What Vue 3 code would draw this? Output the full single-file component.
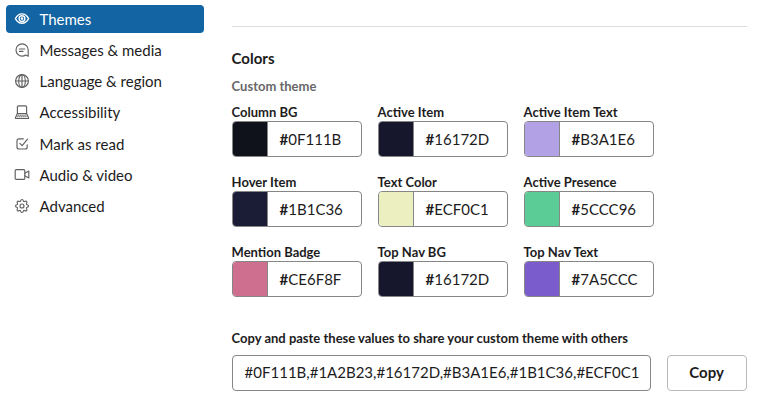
<script setup>
const menu = [
  { label: 'Themes', icon: 'eye', active: true },
  { label: 'Messages & media', icon: 'message' },
  { label: 'Language & region', icon: 'globe' },
  { label: 'Accessibility', icon: 'laptop' },
  { label: 'Mark as read', icon: 'check' },
  { label: 'Audio & video', icon: 'video' },
  { label: 'Advanced', icon: 'gear' },
]

const colors = [
  { label: 'Column BG', value: '0F111B' },
  { label: 'Active Item', value: '16172D' },
  { label: 'Active Item Text', value: 'B3A1E6' },
  { label: 'Hover Item', value: '1B1C36' },
  { label: 'Text Color', value: 'ECF0C1' },
  { label: 'Active Presence', value: '5CCC96' },
  { label: 'Mention Badge', value: 'CE6F8F' },
  { label: 'Top Nav BG', value: '16172D' },
  { label: 'Top Nav Text', value: '7A5CCC' },
]

const themeString = '#0F111B,#1A2B23,#16172D,#B3A1E6,#1B1C36,#ECF0C1'
</script>

<template>
  <div class="preferences">
    <nav class="sidebar">
      <a v-for="item in menu" :key="item.label" class="item" :class="{ active: item.active }">
        <svg class="icon" viewBox="0 0 16 16">
          <g v-if="item.icon === 'eye'" stroke-width="1.4">
            <path d="M1.400 7.600C3 4.700 5.200 2.900 8 2.900s5 1.800 6.600 4.700C13 10.500 10.800 12.300 8 12.300S3 10.500 1.400 7.600Z" />
            <circle cx="8" cy="7.600" r="2.900" />
            <circle cx="8" cy="7.600" r="0.600" />
          </g>
          <g v-else-if="item.icon === 'message'">
            <path d="M14.200 8A6.100 6.100 0 1 0 8.100 14.100c1.400 0 2.600-.4 3.600-1.100l2.500 1.200Z" />
            <path d="M5.400 7h5.400M5.400 9.400h3.600" />
          </g>
          <g v-else-if="item.icon === 'globe'">
            <circle cx="8" cy="8" r="6.400" />
            <ellipse cx="8" cy="8" rx="3.300" ry="6.400" />
            <path d="M1.500 8h13M8 1.500v13" />
          </g>
          <g v-else-if="item.icon === 'laptop'">
            <path d="M3.400 9.500V3c0-.7.4-1.100 1.100-1.100h7c.7 0 1.100.4 1.100 1.100v6.500" />
            <path d="M3.400 9.500h9.200l1.900 3.900v1.100h-13v-1.100Z" />
            <path d="M4 11.100h8M3.200 12.700h9.600" stroke-dasharray=".6 1.300" />
          </g>
          <g v-else-if="item.icon === 'check'">
            <path d="M9.400 2.800H5a2 2 0 0 0-2 2V11a2 2 0 0 0 2 2h6.200a2 2 0 0 0 2-2V8.800" />
            <path d="m5.900 7.300 2.300 2.400 5.300-6.500" />
          </g>
          <g v-else-if="item.icon === 'video'">
            <rect x="1.200" y="2.600" width="9.600" height="9.800" rx="1" />
            <path d="m10.800 6.300 4-2.200v6.800l-4-2.200" />
          </g>
          <g v-else>
            <path d="M6.500 3.200Q7 1.500 8 1.500T9.500 3.200q.3.500.9.300Q11.900 2.700 12.600 3.400T12.500 5.600q-.2.600.3.900Q14.500 7 14.500 8T12.800 9.500q-.5.300-.3.900Q13.300 11.900 12.600 12.600T10.400 12.500q-.6-.2-.9.300Q9 14.500 8 14.500T6.500 12.800q-.3-.5-.9-.3Q4.100 13.300 3.400 12.600T3.500 10.400q.2-.6-.3-.9Q1.500 9 1.500 8T3.200 6.500q.5-.3.3-.9Q2.700 4.100 3.400 3.400T5.600 3.500q.6.200.9-.3Z" />
            <circle cx="8" cy="8" r="2" />
          </g>
        </svg>
        <span>{{ item.label }}</span>
      </a>
    </nav>

    <main class="content">
      <hr class="divider" />
      <h2 class="title">Colors</h2>
      <p class="subtitle">Custom theme</p>

      <div class="grid">
        <label v-for="color in colors" :key="color.label" class="field">
          <span class="label">{{ color.label }}</span>
          <span class="box">
            <span class="swatch" :style="{ background: '#' + color.value }"></span>
            <span class="value"><b>#</b>{{ color.value }}</span>
          </span>
        </label>
      </div>

      <p class="share-label">Copy and paste these values to share your custom theme with others</p>
      <div class="share">
        <div class="share-value">{{ themeString }}</div>
        <button class="copy" type="button">Copy</button>
      </div>
    </main>
  </div>
</template>

<style>
body {
  background: #fff;
}
</style>

<style scoped>
.preferences {
  display: flex;
  height: 411px;
  overflow: hidden;
  box-sizing: border-box;
  padding: 5px 17.400px 0 6px;
  gap: 27.600px;
  background: #fff;
  color: #1d1c1d;
  font-family: Lato, "Liberation Sans", sans-serif;
  font-size: 15px;
}
.sidebar {
  width: 198px;
  flex: none;
  display: flex;
  flex-direction: column;
  gap: 3.150px;
}
.item {
  display: flex;
  align-items: center;
  height: 28px;
  padding-left: 8px;
  gap: 9.500px;
  border-radius: 4px;
  line-height: 28px;
}
.item.active {
  background: #1264a3;
  color: #fff;
}
.icon {
  width: 16px;
  height: 16px;
  fill: none;
  stroke: #616061;
  stroke-width: 1.150;
  stroke-linecap: round;
  stroke-linejoin: round;
}
.active .icon {
  stroke: #fff;
}
.content {
  flex: 1;
  min-width: 0;
}
.divider {
  height: 1px;
  margin: 21px 0 20px;
  border: 0;
  background: #dddddd;
}
.title {
  margin: 0;
  font-size: 15px;
  line-height: 22px;
  font-weight: 700;
}
.subtitle {
  margin: 8px 0;
  font-size: 13px;
  line-height: 18px;
  font-weight: 700;
  color: #696869;
}
.grid {
  display: grid;
  grid-template-columns: repeat(3, 130px);
  gap: 16px;
}
.field {
  display: flex;
  flex-direction: column;
  height: 54px;
}
.label {
  height: 18px;
  font-size: 13px;
  line-height: 18px;
  font-weight: 700;
  white-space: nowrap;
}
.box {
  display: flex;
  box-sizing: border-box;
  height: 36px;
  border: 1px solid #868686;
  border-radius: 4px;
  overflow: hidden;
}
.swatch {
  width: 34px;
  flex: none;
  border-right: 1px solid #868686;
}
.value {
  padding-left: 12px;
  line-height: 35px;
}
.share-label {
  margin: 32px 0 8px;
  font-size: 13px;
  line-height: 18px;
  font-weight: 700;
}
.share {
  display: flex;
  gap: 16px;
}
.share-value {
  flex: 1;
  box-sizing: border-box;
  height: 36px;
  padding: 0 12px;
  border: 1px solid #868686;
  border-radius: 4px;
  line-height: 32px;
  white-space: nowrap;
  overflow: hidden;
}
.copy {
  box-sizing: border-box;
  width: 80px;
  height: 36px;
  padding: 0 0 2px;
  border: 1px solid #bbbabb;
  border-radius: 4px;
  background: #fff;
  color: #1d1c1d;
  font: 700 15px/32px Lato, "Liberation Sans", sans-serif;
}
</style>
